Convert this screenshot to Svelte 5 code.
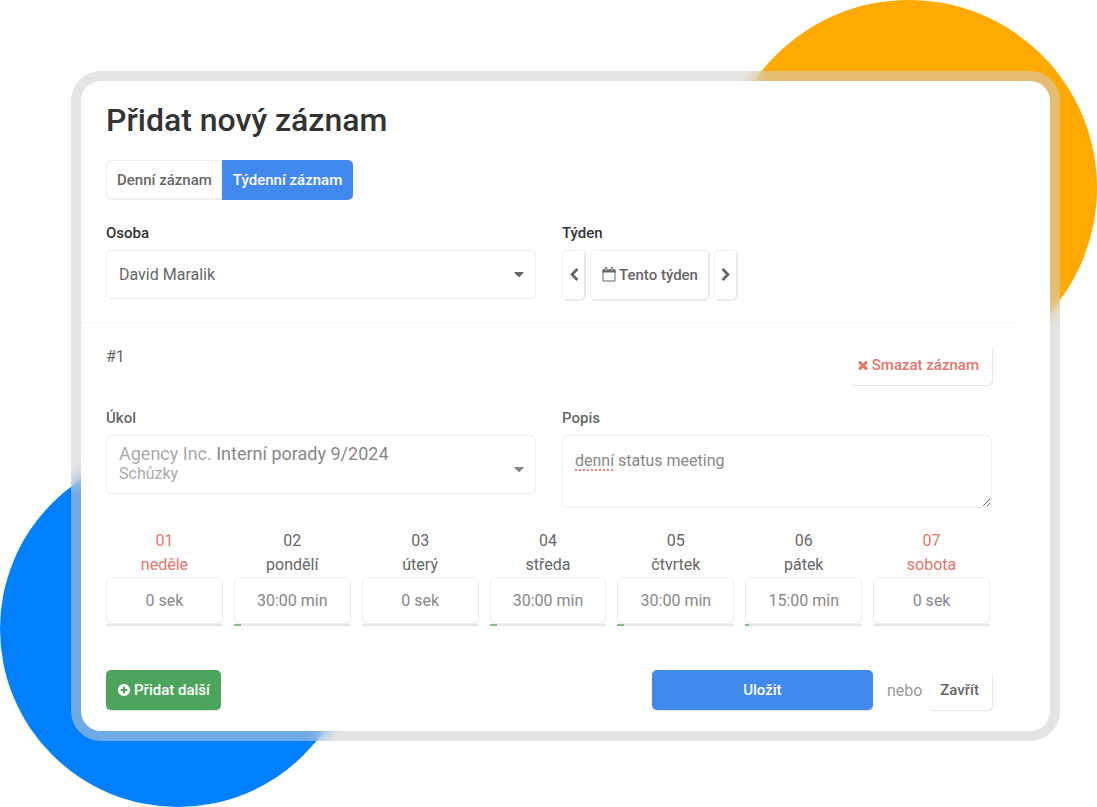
<script lang="ts">
	const icons = {
		left: 'M1427 301l-531 531 531 531q19 19 19 45t-19 45l-166 166q-19 19-45 19t-45-19l-742-742q-19-19-19-45t19-45l742-742q19-19 45-19t45 19l166 166q19 19 19 45t-19 45z',
		right: 'M1363 877l-742 742q-19 19-45 19t-45-19l-166-166q-19-19-19-45t19-45l531-531-531-531q-19-19-19-45t19-45l166-166q19-19 45-19t45 19l742 742q19 19 19 45t-19 45z',
		times: 'M1490 1322q0 40-28 68l-136 136q-28 28-68 28t-68-28l-294-294-294 294q-28 28-68 28t-68-28l-136-136q-28-28-28-68t28-68l294-294-294-294q-28-28-28-68t28-68l136-136q28-28 68-28t68 28l294 294 294-294q28-28 68-28t68 28l136 136q28 28 28 68t-28 68l-294 294 294 294q28 28 28 68z',
		plus: 'M1344 960v-128q0-26-19-45t-45-19h-256v-256q0-26-19-45t-45-19h-128q-26 0-45 19t-19 45v256h-256q-26 0-45 19t-19 45v128q0 26 19 45t45 19h256v256q0 26 19 45t45 19h128q26 0 45-19t19-45v-256h256q26 0 45-19t19-45zm320-64q0 209-103 385.5t-279.5 279.5-385.5 103-385.5-103-279.5-279.5-103-385.5 103-385.5 279.5-279.5 385.5-103 385.5 103 279.5 279.5 103 385.5z'
	};

	let rezim = $state('tyden');
	let popis = $state('denní status meeting');

	let dny = $state([
		{ cislo: '01', nazev: 'neděle', cas: '0 sek', podil: 0, vikend: true },
		{ cislo: '02', nazev: 'pondělí', cas: '30:00 min', podil: 6, vikend: false },
		{ cislo: '03', nazev: 'úterý', cas: '0 sek', podil: 0, vikend: false },
		{ cislo: '04', nazev: 'středa', cas: '30:00 min', podil: 6, vikend: false },
		{ cislo: '05', nazev: 'čtvrtek', cas: '30:00 min', podil: 6, vikend: false },
		{ cislo: '06', nazev: 'pátek', cas: '15:00 min', podil: 3, vikend: false },
		{ cislo: '07', nazev: 'sobota', cas: '0 sek', podil: 0, vikend: true }
	]);
</script>

{#snippet icon(d: string)}
	<svg class="icon" viewBox="0 0 1792 1792" aria-hidden="true"><path {d} /></svg>
{/snippet}

{#snippet caret()}
	<svg class="caret" viewBox="0 0 10 6" aria-hidden="true"><path d="M.9 0h8.2q.9.1.4 1L5.7 4.8q-.7.6-1.4 0L.5 1Q0 .1.9 0z" /></svg>
{/snippet}

<div class="page">
	<div class="circle orange"></div>
	<div class="circle blue"></div>

	<main class="frame">
		<form class="card" onsubmit={(e) => e.preventDefault()}>
			<section class="top">
				<h1>Přidat nový záznam</h1>

				<div class="tabs">
					<button type="button" class:active={rezim === 'den'} onclick={() => rezim = 'den'}>Denní záznam</button>
					<button type="button" class:active={rezim === 'tyden'} onclick={() => rezim = 'tyden'}>Týdenní záznam</button>
				</div>

				<div class="cols">
					<div>
						<label class="label dark" for="osoba">Osoba</label>
						<div class="select">
							<select id="osoba" class="field person">
								<option>David Maralik</option>
							</select>
							{@render caret()}
						</div>
					</div>
					<div>
						<span class="label dark" id="tyden">Týden</span>
						<div class="week" role="group" aria-labelledby="tyden">
							<button type="button" class="btn arrow" aria-label="Předchozí týden">{@render icon(icons.left)}</button>
							<button type="button" class="btn current">
								<svg class="calendar" viewBox="0 0 14 15" aria-hidden="true">
									<path d="M1 3h12v11H1z" fill="none" stroke="currentColor" />
									<path d="M.5 2.5h13v3H.5z" fill="currentColor" />
									<path d="M4 1.3v2.4M10 1.3v2.4" stroke="currentColor" stroke-width="2.6" stroke-linecap="round" />
									<path d="M4 1.4v2M10 1.4v2" stroke="#fff" stroke-width=".8" stroke-linecap="round" />
								</svg>
								Tento týden
							</button>
							<button type="button" class="btn arrow" aria-label="Další týden">{@render icon(icons.right)}</button>
						</div>
					</div>
				</div>
			</section>

			<section class="entry">
				<div class="entry-head">
					<span class="number">#1</span>
					<button type="button" class="btn delete">{@render icon(icons.times)}Smazat záznam</button>
				</div>

				<div class="cols">
					<div>
						<label class="label" for="ukol">Úkol</label>
						<div class="select field task">
							<div class="task-name"><span>Agency Inc.</span> Interní porady 9/2024</div>
							<div class="task-type">Schůzky</div>
							<select id="ukol" class="task-select">
								<option>Agency Inc. Interní porady 9/2024 – Schůzky</option>
							</select>
							{@render caret()}
						</div>
					</div>
					<div>
						<label class="label" for="popis">Popis</label>
						<div class="note">
							<textarea id="popis" class="field" spellcheck="false" bind:value={popis}></textarea>
							<!-- spelling marks lie over the textarea -->
							<div class="marks" aria-hidden="true"><u>{popis.split(' ')[0]}</u></div>
						</div>
					</div>
				</div>

				<div class="days">
					{#each dny as den}
						<div class="day">
							<label class:weekend={den.vikend} for="den-{den.cislo}">{den.cislo}<br />{den.nazev}</label>
							<input id="den-{den.cislo}" class="field" type="text" bind:value={den.cas} />
							<div class="bar"><div class="bar-fill" style="width: {den.podil}%"></div></div>
						</div>
					{/each}
				</div>

				<div class="actions">
					<button type="button" class="btn add">{@render icon(icons.plus)}Přidat další</button>
					<div class="submit">
						<button type="submit" class="btn save">Uložit</button>
						<span class="or">nebo</span>
						<button type="button" class="btn close">Zavřít</button>
					</div>
				</div>
			</section>
		</form>
	</main>
</div>

<style>
	:global(body) { margin: 0; background: #fff; }

	.page {
		position: relative; box-sizing: border-box; min-height: 100vh; overflow: hidden;
		padding: 71px 37px 66px 71px;
		font-family: Roboto, "Noto Sans", sans-serif; font-size: 16px; color: #666;
	}
	.page * { box-sizing: border-box; }
	button, input, select, textarea { font: inherit; color: inherit; margin: 0; }
	button { cursor: pointer; }

	.circle { position: absolute; border-radius: 50%; }
	.orange { top: 0; right: 0; width: 376px; height: 376px; background: #ffaa03; }
	.blue { bottom: 0; left: 0; width: 356px; height: 356px; background: #0080ff; }

	.frame {
		position: relative; padding: 10px; border-radius: 30px;
		background: rgba(205,205,205,0.54); backdrop-filter: blur(8px);
	}
	.card { background: #fff; border-radius: 20px; padding: 20px 33px 21px 0; }

	.top { padding: 0 25px 21px; border-bottom: 1px solid #f7f7f7; }
	h1 { margin: 0 0 21px; font-size: 32px; line-height: 38px; font-weight: 500; color: #333; }

	.tabs { display: flex; margin-bottom: 24px; }
	.tabs button {
		height: 40px; padding: 0 10px; font-size: 15px; font-weight: 500;
		background: #fff; border: 1px solid #eee; border-bottom-width: 2px;
	}
	.tabs button:first-child { border-radius: 5px 0 0 5px; border-right: 0; }
	.tabs button:last-child { border-radius: 0 5px 5px 0; }
	.tabs .active { background: #4289ed; border-color: #4289ed; color: #fff; }

	.cols { display: grid; grid-template-columns: 1fr 1fr; gap: 26px; }
	.label { display: block; margin-bottom: 8px; font-size: 15px; line-height: 18px; font-weight: 500; }
	.dark { color: #333; }

	.field { display: block; width: 100%; background: #fff; border: 1px solid #eee; border-radius: 5px; outline: none; }
	.select { position: relative; }
	.person { height: 49px; padding: 0 12px; appearance: none; }
	.caret { position: absolute; right: 12px; top: 50%; width: 10px; height: 6px; margin-top: -3px; fill: #666; pointer-events: none; }

	.btn {
		display: flex; align-items: center; justify-content: center; height: 40px; padding: 0 11px;
		font-size: 15px; font-weight: 500; white-space: nowrap;
		background: #fff; border: 0; border-radius: 5px; box-shadow: 0 1px 1px #e0e0e0;
	}
	.icon { flex: none; width: 14px; height: 14px; fill: currentColor; }

	.week { display: flex; gap: 4px; }
	.week .btn { height: 51px; padding-bottom: 2px; border: 1px solid #eee; box-shadow: inset -1px -1px 0 #e8e8e8; }
	.week .arrow { width: 24px; padding: 0 0 2px; }
	.calendar { width: 14px; height: 15px; margin-right: 3px; }

	.entry { padding: 22px 25px 0; }
	.entry .label { color: #666; }
	.entry-head { display: flex; justify-content: space-between; margin-bottom: 24px; }
	.number { line-height: 24px; }
	.delete, .close { padding: 0 13px; box-shadow: 1px 1px 1px #e6e6e6; }
	.delete { padding-left: 8px; color: #e6746b; }
	.delete .icon { margin-right: 2px; }

	.task { height: 59px; padding: 8px 12px; color: #888; }
	.task-name { font-size: 18px; line-height: 20px; }
	.task-name span, .task-type { color: #aaa; }
	.task-type { line-height: 20px; }
	.task-select { position: absolute; inset: 0; width: 100%; height: 100%; opacity: 0; }
	.task .caret { right: 11px; fill: #888; margin-top: 2px; }

	.note { position: relative; }
	.note textarea { height: 73px; padding: 15px 12px; line-height: 20px; color: #888; }
	.marks { position: absolute; top: 16px; left: 13px; line-height: 20px; color: transparent; pointer-events: none; }
	.marks u { text-decoration: underline dotted #f08078 2px; text-underline-offset: 3px; }

	.days { display: grid; grid-template-columns: repeat(7, 1fr); gap: 11px; margin-top: 21px; padding-right: 2px; }
	.day label { display: block; text-align: center; line-height: 24px; }
	.day .weekend { color: #e6746b; }
	.day input { height: 47px; padding: 0 8px; text-align: center; color: #888; }
	.bar { height: 2px; background: #e6e6e6; }
	.bar-fill { height: 2px; background: #80c08c; }

	.actions { display: flex; justify-content: space-between; margin-top: 44px; }
	.submit { display: flex; align-items: center; }
	.add { background: #4da45d; color: #fff; }
	.add .icon { margin-right: 3px; }
	.save { width: 221px; background: #4289ed; color: #fff; }
	.or { margin: 0 5px 0 14px; color: #999; }
</style>
